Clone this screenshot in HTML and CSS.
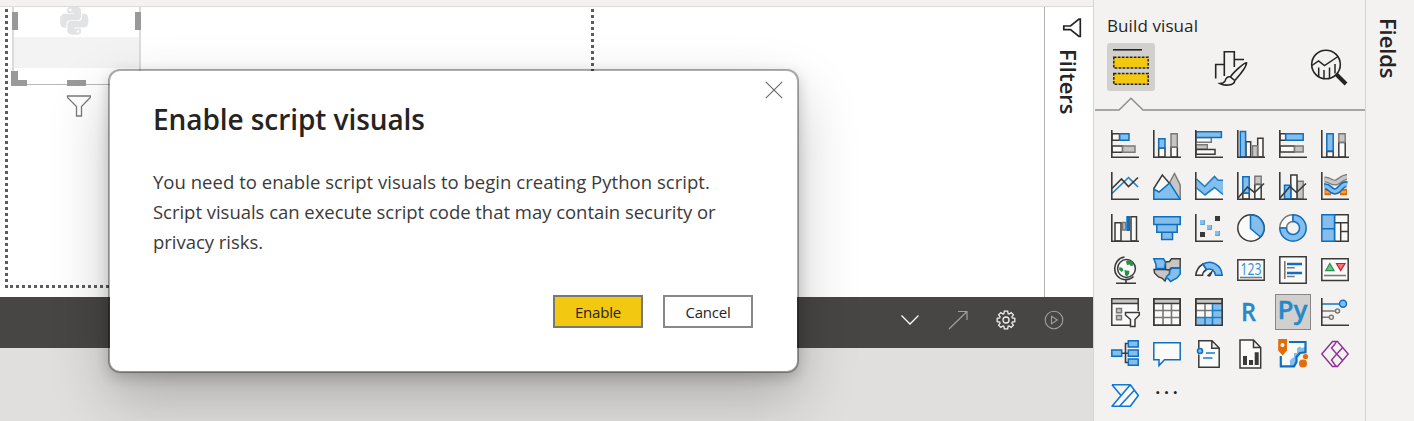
FILE: index.html
```html
<!DOCTYPE html>
<html lang="en">
<head>
<meta charset="utf-8">
<title>Build visual</title>
<link rel="stylesheet" href="styles.css">
</head>
<body>
<div class="app">
  <main class="workspace">
    <div class="ribbon-edge"></div>
    <div class="report">
      <section class="canvas">
        <div class="page-dots"></div>
        <div class="visual">
          <svg class="visual-art" width="132" height="115" viewBox="10 7 132 115">
            <path d="M13 7V85M140 7V85" stroke="#dcdcdc" stroke-width="2"/>
            <path d="M14 37H139V68H14z" fill="#f3f3f3"/>
            <path d="M12 84.5H141" stroke="#b8b8b8"/>
            <path d="M12 12h6v18h-6zM135 12h6v18h-6zM67 80h19v6H67zM11 71h7v9h9v6H11z" fill="#999"/>
            <g transform="translate(60 6.5) scale(1.18)" fill="#e1e3e5"><path d="M14.25.18l.9.2.73.26.59.3.45.32.34.34.25.34.16.33.1.3.04.26.02.2-.01.13V8.5l-.05.63-.13.55-.21.46-.26.38-.3.31-.33.25-.35.19-.35.14-.33.1-.3.07-.26.04-.21.02H8.77l-.69.05-.59.14-.5.22-.41.27-.33.32-.27.35-.2.36-.15.37-.1.35-.07.32-.04.27-.02.21v3.06H3.17l-.21-.03-.28-.07-.32-.12-.35-.18-.36-.26-.36-.36-.35-.46-.32-.59-.28-.73-.21-.88-.14-1.05-.05-1.23.06-1.22.16-1.04.24-.87.32-.71.36-.57.4-.44.42-.33.42-.24.4-.16.36-.1.32-.05.24-.01h.16l.06.01h8.16v-.83H6.18l-.01-2.75-.02-.37.05-.34.11-.31.17-.28.25-.26.31-.23.38-.2.44-.18.51-.15.58-.12.64-.1.71-.06.77-.04.84-.02 1.27.05zm-6.3 1.98l-.23.33-.08.41.08.41.23.34.33.22.41.09.41-.09.33-.22.23-.34.08-.41-.08-.41-.23-.33-.33-.22-.41-.09-.41.09zm13.09 3.95l.28.06.32.12.35.18.36.27.36.35.35.47.32.59.28.73.21.88.14 1.04.05 1.23-.06 1.23-.16 1.04-.24.86-.32.71-.36.57-.4.45-.42.33-.42.24-.4.16-.36.09-.32.05-.24.02-.16-.01h-8.22v.82h5.84l.01 2.76.02.36-.05.34-.11.31-.17.29-.25.25-.31.24-.38.2-.44.17-.51.15-.58.13-.64.09-.71.07-.77.04-.84.01-1.27-.04-1.07-.14-.9-.2-.73-.25-.59-.3-.45-.33-.34-.34-.25-.34-.16-.33-.1-.3-.04-.25-.02-.2.01-.13v-5.34l.05-.64.13-.54.21-.46.26-.38.3-.32.33-.24.35-.2.35-.14.33-.1.3-.06.26-.04.21-.02.13-.01h5.84l.69-.05.59-.14.5-.21.41-.28.33-.32.27-.35.2-.36.15-.36.1-.35.07-.32.04-.28.02-.21V6.07h2.09l.14.01zm-6.47 14.25l-.23.33-.08.41.08.41.23.33.33.23.41.08.41-.08.33-.23.23-.33.08-.41-.08-.41-.23-.33-.33-.23-.41-.08-.41.08z"/></g>
            <path d="M67.5 96H90.3V97.5L81.5 106.5V116H76.500V106.500L67.500 97.500z" fill="#fff" stroke="#7a7a7a" stroke-width="1.3"/>
          </svg>
        </div>
      </section>
      <aside class="filters">
        <svg width="20" height="20" viewBox="0 0 20 20"><path d="M18.300 1V18.500H17L8.500 11.700H1.800V8H8.500L17 1z" fill="none" stroke="#252423" stroke-width="1.700"/></svg>
        <span class="side-title filters-title">Filters</span>
      </aside>
    </div>
    <div class="script-bar">
      <svg width="20" height="20" viewBox="0 0 20 20"><path d="M1.500 5.500L10 14L18.500 5.500" stroke="#fff" stroke-width="1.300" fill="none"/></svg>
      <svg width="20" height="20" viewBox="0 0 20 20"><path d="M1 19L19 1.500M10 1.500H19V10" stroke="#a19f9d" stroke-width="1.200" fill="none"/></svg>
      <svg width="20" height="20" viewBox="0 0 20 20"><g fill="none" stroke="#f0efee" stroke-width="1.300"><path d="M8.300 1.200H11.700L12.100 3.700L13.100 4.100L15.200 2.600L17.400 4.800L15.900 6.900L16.300 7.900L18.800 8.300V11.700L16.300 12.100L15.900 13.100L17.400 15.200L15.200 17.400L13.100 15.900L12.100 16.300L11.700 18.800H8.300L7.900 16.300L6.900 15.900L4.800 17.400L2.600 15.200L4.100 13.100L3.700 12.100L1.200 11.700V8.300L3.700 7.900L4.100 6.900L2.600 4.800L4.800 2.600L6.900 4.100L7.900 3.700z"/><circle cx="10" cy="10" r="3"/></g></svg>
      <svg width="20" height="20" viewBox="0 0 20 20"><g fill="none" stroke="#a19f9d" stroke-width="1.100"><circle cx="10" cy="10" r="8.800"/><path d="M7.500 6.300L13.300 10L7.500 13.700z"/></g></svg>
    </div>
  </main>

  <aside class="build">
    <h2 class="build-title">Build visual</h2>
    <div class="tabs">
      <div class="tab tab-on"><svg width="48" height="48" viewBox="0 0 48 48"><path d="M6 6.800H35" stroke="#252423" stroke-width="1.600"/><g fill="#f2c811" stroke="#252423" stroke-width="1.500" stroke-dasharray="2.700 1.300"><path d="M6.800 14.300H41.200V25H6.800zM6.800 30.600H41.200V41.300H6.800z"/></g></svg></div>
      <div class="tab"><svg width="48" height="48" viewBox="0 0 48 48"><g fill="none" stroke="#252423" stroke-width="1.600"><path d="M10.700 35.500V21.500H19.300V32M19.300 33V8.700H29.300V24M29.300 16.500H39"/><path d="M41.500 19.800C38 20.200 27 31 25.500 34L29.800 37.500C33 34 41.500 24 41.500 19.800zM25.500 34C22 33 20.500 36.500 20 38C19 40 17 40.500 15 40.600C19 43 29.500 43 29.800 37.500"/></g></svg></div>
      <div class="tab"><svg width="48" height="48" viewBox="-2 0 48 48"><g fill="none" stroke="#252423"><circle cx="21" cy="21.500" r="14.300" stroke-width="1.600"/><path d="M7 22.500L13.500 18L19.500 22.500L33 13.500M13.700 24.500V34M19 27V36M24.500 24.500V35M30 21V30.500" stroke-width="1.500"/><path d="M31 31L41 41" stroke-width="4"/></g></svg></div>
    </div>
    <svg class="tab-rule" width="271" height="16" viewBox="0 0 271 16"><path d="M1 13H25L37 1.200L49 13H271" fill="none" stroke="#8f8d8b" stroke-width="1.500"/></svg>
    <div class="gallery">
      <svg class="ic" viewBox="0 0 28 28"><path class="w" d="M1 3.700H8.500V10.300H1zM1 16H11.500V22.300H1z"/><path class="b" d="M8.700 3.700H18V10.300H8.700z"/><path class="g" d="M11.700 16H24V22.300H11.700z"/><path class="ax" d="M.8 0V27.200H28"/></svg>
      <svg class="ic" viewBox="0 0 28 28"><path class="w" d="M5.700 18H12V27H5.700zM18 17H24.300V27H18z"/><path class="b" d="M5.700 8.700H12V18H5.700z"/><path class="g" d="M18 3.700H24.300V17H18z"/><path class="ax" d="M.8 0V27.200H28"/></svg>
      <svg class="ic" viewBox="0 0 28 28"><path class="w gs" d="M1 7.500H16.300V12.300H1z"/><path class="b" d="M1 1.800H26.400V7.400H1z"/><path class="g" d="M1 14.700H12.300V19.200H1z"/><path class="w" d="M1 19.500H20V24.300H1z"/><path class="ax" d="M.8 0V27.200H28"/></svg>
      <svg class="ic" viewBox="0 0 28 28"><path class="w" d="M9 11.700H13.700V27H9zM20.700 8.300H26V27H20.700z"/><path class="g" d="M15.500 15.700H20.500V27H15.500z"/><path class="b" d="M3.300 1.600H8.600V27H3.300z"/><path class="ax" d="M.8 0V27.200H28"/></svg>
      <svg class="ic" viewBox="0 0 28 28"><path class="w" d="M1 3.700H6.700V10.300H1zM1 16H15.500V22H1z"/><path class="b" d="M6.700 3.700H24.200V10.300H6.700z"/><path class="g" d="M15.600 16H24.200V22H15.600z"/><path class="ax" d="M.8 0V27.200H28"/></svg>
      <svg class="ic" viewBox="0 0 28 28"><path class="w" d="M5.800 21.500H12.200V27H5.800zM17.800 12.500H24.200V27H17.800z"/><path class="b" d="M5.800 3.700H12.200V21H5.800z"/><path class="g" d="M17.800 3.700H24.200V12.300H17.800z"/><path class="ax" d="M.8 0V27.200H28"/></svg>

      <svg class="ic" viewBox="0 0 28 28"><path class="ln bl" d="M1 21.500L17.500 5.500L27 15"/><path class="ln" d="M1 16.500L10.500 7L17.500 14.500L27 5.500"/><path class="ax" d="M.8 0V27.200H28"/></svg>
      <svg class="ic" viewBox="0 0 28 28"><path class="g" d="M16 11.500L21.500 1.500L27.200 13V27H16z"/><path class="w" d="M.8 27V16.500L9.300 3L17 12L12 27z"/><path class="b" d="M.8 27.200V17L6 20L16.700 11L27 27.200z"/></svg>
      <svg class="ic" viewBox="0 0 28 28"><path fill="#fafafa" d="M1.500 16L10 23L19.500 15L28 23V27H1.500z"/><path fill="#83beec" d="M1.500 7L9.700 14.500L19.500 4.500L23 8.300H28V22.500L19.500 15.500L10 23L1.500 16z"/><path class="ln bl" d="M1.500 7L9.700 14.500L19.500 4.500L23 8.300H28M1.500 16L10 23L19.500 15.500L28 22.500"/><path class="ax" d="M.8 0V27.200H28"/></svg>
      <svg class="ic" viewBox="0 0 28 28"><path class="w" d="M5.800 21H12.200V27H5.800zM17.800 12.500H24.200V27H17.800z"/><path class="b" d="M5.800 4.700H12.200V21H5.800z"/><path class="g" d="M17.800 4.200H24.200V12H17.800z"/><path class="ln" d="M1 26L10.500 15L17.500 20.500L27 11.500"/><path class="ax" d="M.8 0V27.200H28"/></svg>
      <svg class="ic" viewBox="0 0 28 28"><path class="g" d="M18 9.300H24.200V27H18z"/><path class="w" d="M11.800 3H18V27H11.800z"/><path class="b" d="M5.500 13.300H11.800V27H5.500z"/><path class="ln" d="M1 26L11 14.500L17.500 20.500L27 11.500"/><path class="ax" d="M.8 0V27.200H28"/></svg>
      <svg class="ic" viewBox="0 0 28 28"><path d="M3.500 20H10M19 20H26" fill="none" stroke="#d96b0b" stroke-width="6.500"/><path d="M4.500 20H9M20 20H25" fill="none" stroke="#f5a14b" stroke-width="2.500"/><path d="M3.500 7.500C9 7.500 11 11.500 15 10.500C19 9.500 21 5 26 5" fill="none" stroke="#7a7876" stroke-width="6"/><path d="M3.500 7.500C9 7.500 11 11.500 15 10.500C19 9.500 21 5 26 5" fill="none" stroke="#c8c6c4" stroke-width="3.500"/><path d="M3.500 14.500C8.500 13.500 9 19.500 14 19.500C19.500 19.500 20 11 26 12.500" fill="none" stroke="#106ebe" stroke-width="6.500"/><path d="M3.500 14.500C8.500 13.500 9 19.500 14 19.500C19.500 19.500 20 11 26 12.500" fill="none" stroke="#83beec" stroke-width="3.300"/><path class="ax" d="M.8 0V27.200H28"/></svg>

      <svg class="ic" viewBox="0 0 28 28"><path class="w" d="M4 8.700H10V27H4zM20 2.700H25.500V27H20z"/><path class="g" d="M11.700 8.500H14.500V16H11.700z"/><path d="M15.300 2H19V17H15.300z" fill="#106ebe"/><path class="ax" d="M.8 0V27.200H28"/></svg>
      <svg class="ic" viewBox="0 0 28 28"><path class="b" d="M.8 2.700H27.200V10.500H.8zM3.800 10.500H24.200V18.300H3.800zM8.700 18.300H19.500V25.500H8.700z"/></svg>
      <svg class="ic" viewBox="0 0 28 28"><path fill="#83beec" d="M5 6h5v5H5zM12 11h5v5h-5zM20 17h5v5h-5z"/><path d="M5.500 10.500H9.500V6M12.500 15.500H16.500V11M20.500 21.500H24.500V17" stroke="#5e9dcc" fill="none"/><path fill="#3b3a39" d="M20 2h5v5h-5zM5 18h5v5H5z"/><path class="ax" d="M.8 0V27.200H28"/></svg>
      <svg class="ic" viewBox="0 0 28 28"><circle class="w" cx="14" cy="14" r="13.200"/><path class="b" d="M13.500 .9A13.200 13.200 0 0 1 23.500 23L13.500 14.500z"/></svg>
      <svg class="ic" viewBox="0 0 28 28"><path class="w gs" d="M.8 14A13.200 13.200 0 0 1 14 .8V7.500A6.500 6.500 0 0 0 7.500 14z"/><path class="b" d="M14 .8A13.200 13.200 0 1 1 .8 14H7.500A6.500 6.500 0 1 0 14 7.500z"/></svg>
      <svg class="ic" viewBox="0 0 28 28"><path class="w" d="M13.500 .8H27.200V27.200H13.500zM13.500 8.700H27.200M19.700 8.700V27M19.700 17.500H27"/><path class="b" d="M.8 .8H13.500V27.200H.8zM.8 14.800H13.500"/></svg>

      <svg class="ic" viewBox="0 0 28 28"><path class="ln" d="M13.500 1C.5 3 .5 22 13 23.500C17 24 20 23 22.500 20.500M15 23.500V27M5 27.200H25"/><circle class="w" cx="15.500" cy="12.500" r="8.900"/><path fill="#269147" d="M15 5.500C17 3 21 4.500 22 7L22.500 9.500L20 10L18.500 8.500L16 9zM8.500 11L11.500 12L12.500 14.500L10.500 16L8 13.500zM13.500 14L18.500 15L18 18L16 20.500L14 19z"/></svg>
      <svg class="ic" viewBox="0 0 28 28"><path class="g ks" d="M12.500 6L16.500 5.500L18.500 2.800H27.200V12H18L16.500 14L12.500 13.500z"/><path class="g ks" d="M1 13.500H12L16.500 14V18L13.500 21.500L12 25L9 22L5.500 21L1.500 17z"/><path class="b" d="M.8 2.800H10.500L12.500 6L11.500 12.500H3V8.500z"/><path class="b" d="M17 14L19 12.300H27.200V18L24 22L17.500 25.500L15 22.500H12.800L14 20L16.500 18z"/></svg>
      <svg class="ic" viewBox="0 0 28 28"><path class="w" d="M.8 19.200C1.200 14 4 10.500 8 8L11.500 13.500C9 15 7.700 17 7.500 19.200z"/><path class="b" d="M8 8C17 3.500 26.500 9 27.200 19.200H20.500C19.700 14 15.500 12 11.500 13.500z"/><path d="M12 19.500L18.700 13L16 19.500C15.200 21 12.800 21 12 19.500z" fill="#3b3a39"/></svg>
      <svg class="ic" viewBox="0 0 28 28"><path class="w" d="M.8 3.700H27.200V24.300H.8z"/><text class="digits" x="3.500" y="18.500" textLength="21" lengthAdjust="spacingAndGlyphs">123</text><path class="ln gl" d="M3 21.500H25"/></svg>
      <svg class="ic" viewBox="0 0 28 28"><path class="w" d="M.8 .8H27.200V27.200H.8z"/><path class="ln gl" d="M5.800 5V23M8 11.700H15.700M8 20.500H15.700"/><path d="M8 8H23M8 17H23" stroke="#106ebe" stroke-width="2.600"/></svg>
      <svg class="ic" viewBox="0 0 28 28"><path class="w" d="M.8 2.800H27.200V24.500H.8z"/><path d="M4.700 14.700L8.800 7.500L13 14.700z" fill="#71c18a" stroke="#269147" stroke-width="1.200"/><path d="M15.500 7.500H24L19.700 14.500z" fill="#f4747a" stroke="#c91f26" stroke-width="1.200"/><path class="ln gl" d="M3 19.500H25"/></svg>

      <svg class="ic" viewBox="0 0 28 28"><path class="w" d="M.8 .8H27.200V27.200H.8z"/><path class="g ks" d="M.8 .8H27.200V5.500H.8z"/><path class="g" d="M5.500 10.500H10.500V14.700H5.500zM5.500 17.500H10.500V21.700H5.500z"/><path fill="#f3f2f1" d="M26 13H29V29H22L26 22zM13 13.500L19 20V29H23z"/><path class="w" d="M14.500 14.500H28.300V17L24 21.500V28.500H19.500V21.500L14.500 17z"/></svg>
      <svg class="ic" viewBox="0 0 28 28"><path class="w" d="M.8 .8H27.200V27.200H.8z"/><path class="g ks" d="M.8 .8H27.200V5.500H.8z"/><path class="ln gl" d="M10 6V27M18.500 6V27M1 12.500H27M1 19.500H27"/><path class="ax" d="M.8 .8H27.200V27.200H.8z"/></svg>
      <svg class="ic" viewBox="0 0 28 28"><path class="w" d="M.8 .8H27.200V27.200H.8z"/><path d="M17.500 6H27V27H1V19.500H17.500z" fill="#83beec"/><path class="g ks" d="M.8 .8H27.200V5.500H.8z"/><path class="ln gl" d="M10 6V19.500M1 12.500H17.500"/><path class="ln bl" d="M10 19.500V27M17.500 6V27M17.500 12.500H27M1 19.500H27"/><path class="ax" d="M.8 .8H27.200V27.200H.8z"/></svg>
      <svg class="ic" viewBox="0 0 28 28"><text class="lang" x="4" y="23" textLength="15" lengthAdjust="spacingAndGlyphs">R</text></svg>
      <div class="picked"><svg class="ic" viewBox="0 0 28 28"><text class="lang" x="-1.500" y="20.500" textLength="30" lengthAdjust="spacingAndGlyphs">Py</text></svg></div>
      <svg class="ic" viewBox="0 0 28 28"><path class="ln bl" d="M1 6H19"/><path class="ln gl" d="M1 13H14.500M1 19.300H8.500"/><circle class="b" cx="22" cy="5.700" r="3.500"/><g class="w gs"><circle cx="16.500" cy="13" r="2"/><circle cx="10.300" cy="19.300" r="2"/></g><path class="ax" d="M.8 0V27.200H28"/></svg>

      <svg class="ic" viewBox="0 0 28 28"><path class="ln" d="M11 13.300H17M17 3.500H14.500V22.500H17"/><path class="b" d="M.8 10H10.700V16.300H.8zM17.300 .8H27.200V7H17.300zM17.300 10H27.200V16.300H17.300zM17.300 19H27.200V25.300H17.300z"/></svg>
      <svg class="ic" viewBox="0 0 28 28"><path class="w bs" d="M.8 2.700H27.200V19.700H11.500L6 25.500V19.700H.8z"/></svg>
      <svg class="ic" viewBox="0 0 28 28"><path class="w" d="M3.800 8V.8H17L24.200 8V27.200H3.800V14.500M16.800 1V8.200H24"/><circle class="b" cx="5" cy="11" r="2.500"/><path class="ln bl" d="M11 13H20M8 18H17.500"/></svg>
      <svg class="ic" viewBox="0 0 28 28"><path class="w" d="M3 0H16.500L23.700 7.500V28H3zM16.500 0V7.500H23.700"/><path d="M6 16h4v9H6zM12 20h4v5h-4zM17.700 12.300h4V25h-4z" fill="#3b3a39"/></svg>
      <svg class="ic" viewBox="0 0 28 28"><path class="w" style="stroke:none" d="M1.500 2H26V13L18.500 17V26H1.500z"/><path d="M18 8L21 6.500L22.500 8L26.500 7V12.300L22 12.500L18 17V23L14 26H11V20L15 17V13H18z" fill="#83beec"/><path d="M10 2H26.500V12.300L21 13L17.500 17V22L15 26.300H1.800V16" fill="none" stroke="#106ebe" stroke-width="2.200"/><path d="M-.8 -1H8V10.500L3.600 15.500L-.8 10.500z" fill="#e06c0a"/><circle cx="3.500" cy="5" r="2" fill="#fff"/><circle cx="26.500" cy="16.500" r="2.600" fill="#e06c0a"/><circle cx="24" cy="23.500" r="4" fill="#e06c0a"/></svg>
      <svg class="ic" viewBox="0 0 28 28"><path class="pp" d="M.8 14L11.500 1.500H16.500L27.200 14L16.500 26.500H11.500z"/><path class="pp" d="M14 4L10.500 8L15.700 14L10.500 20L14 25M15.700 14L21.500 7.700M15.700 14L21.500 20.300M14 4L15.500 1.500M14 25L15.500 26.500"/></svg>

      <svg class="ic" viewBox="0 0 28 28"><path class="pa" d="M1 2.700H19.300L27.300 13.500L19.300 24.300H1L19.300 2.700M1 2.700L10 13.500M8.500 24.300L23.300 8.200M1 24.300H6"/></svg>
      <span class="more">...</span>
    </div>
  </aside>

  <aside class="fields"><span class="side-title fields-title">Fields</span></aside>
</div>

<div class="dialog">
  <svg class="close" width="18" height="18" viewBox="0 0 18 18"><path d="M.8 .8L17.200 17.200M17.200 .8L.8 17.200" stroke="#666" stroke-width="1.100"/></svg>
  <h1 class="dialog-title">Enable script visuals</h1>
  <p class="dialog-text"><span class="lead">You need to enable script visuals to begin creating Python script.</span><br>Script visuals can execute script code that may contain security or<br>privacy risks.</p>
  <div class="actions">
    <button class="btn btn-main">Enable</button>
    <button class="btn">Cancel</button>
  </div>
</div>
</body>
</html>
```

FILE: styles.css
```css
* { box-sizing: border-box; }
body {
  margin: 0;
  overflow: hidden;
  font-family: "Open Sans", "Noto Sans", sans-serif;
  color: #252423;
  background: #f3f2f1;
}
svg { display: block; flex: none; overflow: visible; }
.app { display: grid; grid-template-columns: 1093px 272px 1fr; height: 421px; }

.workspace { display: grid; grid-template-rows: 7px 290px 51px 1fr; background: #e0dfdd; }
.ribbon-edge { background: #f3f2f1; border-bottom: 1px solid #dddbd9; }
.report { display: grid; grid-template-columns: 1044px 1fr; background: #fff; }
.canvas { position: relative; padding-left: 10px; overflow: hidden; }
.page-dots {
  position: absolute;
  left: 5px;
  top: 2px;
  width: 589px;
  height: 279px;
  background:
    repeating-linear-gradient(to bottom, #5c5c5c 0 3px, transparent 3px 6px) 0 0 / 3px 100% no-repeat,
    repeating-linear-gradient(to bottom, #5c5c5c 0 3px, transparent 3px 6px) 100% 0 / 3px 100% no-repeat,
    repeating-linear-gradient(to right, #5c5c5c 0 3px, transparent 3px 6px) 5px 100% / 580px 3px no-repeat;
}
.visual { position: relative; width: 132px; }
.visual-art { overflow: hidden; }
.filters {
  display: flex;
  flex-direction: column;
  align-items: center;
  gap: 11px;
  padding: 11px 0 0 6px;
  border-left: 1px solid #b3b0ad;
}
.side-title { writing-mode: vertical-rl; font-weight: 600; font-size: 22px; line-height: 30px; }
.filters-title { margin-right: 6px; letter-spacing: 0; }
.fields-title { letter-spacing: -0.1px; }

.script-bar {
  display: flex;
  justify-content: flex-end;
  align-items: center;
  gap: 28px;
  padding: 0 29px 5px 0;
  background: #484644;
}

.build { border-left: 1px solid #d6d4d2; }
.build-title { margin: 14px 0 0 13px; font-size: 17px; line-height: 24px; font-weight: 500; letter-spacing: 0.1px; }
.tabs { display: flex; gap: 50px; margin: 5px 0 0 13px; }
.tab { width: 48px; height: 48px; border-radius: 3px; }
.tab-on { background: #d2d0ce; }
.tab-rule { margin-top: 6px; }
.gallery { display: grid; grid-template-columns: repeat(6, 28px); grid-auto-rows: 28px; gap: 14px; margin: 17px 0 0 17px; }
.ic { width: 28px; height: 28px; }
.picked { width: 36px; height: 36px; margin: -4px; padding: 3px; border: 1px solid #8a8886; background: #d2d0ce; }
.w { fill: #fafafa; stroke: #3b3a39; stroke-width: 1.5; }
.g { fill: #c8c6c4; stroke: #7a7876; stroke-width: 1.4; }
.b { fill: #83beec; stroke: #106ebe; stroke-width: 1.5; }
.ax { fill: none; stroke: #3b3a39; stroke-width: 1.6; }
.ln { fill: none; stroke: #3b3a39; stroke-width: 1.6; }
.bl { stroke: #1a7fc4; }
.bs { stroke: #106ebe; }
.gl, .gs { stroke: #7a7876; }
.ks { stroke: #3b3a39; }
.pp { fill: none; stroke: #8c2f96; stroke-width: 1.4; }
.pa { fill: #fafafa; stroke: #0f78d4; stroke-width: 1.6; stroke-linejoin: round; }
.digits { font-size: 15.5px; fill: #2a8dd4; }
.lang { font-size: 25px; font-weight: 600; fill: #2488c9; stroke: #2488c9; stroke-width: 0.3; }
.more { padding-left: 2px; font-size: 20px; font-weight: 600; line-height: 10px; letter-spacing: 3.3px; }

.fields { border-left: 1px solid #d6d4d2; padding: 18px 0 0 8px; }

.dialog {
  position: absolute;
  left: 108px;
  top: 69px;
  width: 691px;
  height: 304px;
  padding: 30px 44px 0 43px;
  border: 2px solid rgba(0, 0, 0, 0.32);
  border-radius: 12px;
  background: #fff;
  background-clip: padding-box;
  box-shadow: 0 26px 58px rgba(0, 0, 0, 0.22), 0 5px 14px rgba(0, 0, 0, 0.18);
}
.close { position: absolute; right: 14px; top: 10px; }
.dialog-title { margin: 0; font-size: 28px; line-height: 36px; font-weight: 600; letter-spacing: -0.07px; }
.dialog-text { margin: 30px 0 0; font-size: 18.5px; line-height: 30px; letter-spacing: -0.03px; color: #3b3a39; white-space: nowrap; }
.lead { letter-spacing: 0.03px; }
.actions { display: flex; justify-content: flex-end; gap: 20px; margin-top: 38px; }
.btn {
  width: 90px;
  height: 33px;
  padding: 0;
  border: 2px solid #8a8886;
  background: #fff;
  font: 15px "Open Sans", "Noto Sans", sans-serif;
  letter-spacing: -0.2px;
  color: #252423;
}
.btn-main { background: #f2c811; border-color: #7a7876; }
```
